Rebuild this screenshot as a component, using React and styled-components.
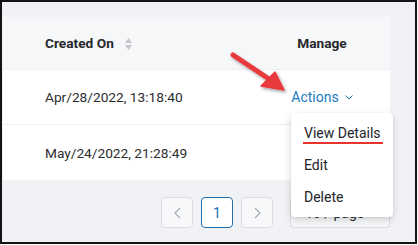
import React from "react";
import styled, { createGlobalStyle } from "styled-components";

const Global = createGlobalStyle`
  html, body { margin: 0; padding: 0; background: #ffffff; }
  body { font-family: Roboto, "Liberation Sans", Arial, sans-serif; }
  * { box-sizing: border-box; }
`;

const Frame = styled.div`
  position: relative;
  width: 417px;
  height: 244px;
  border: 2px solid #141414;
  background: #f0f2f5;
  overflow: hidden;
  display: flex;
  flex-direction: column;
  padding: 15px 25px 0 1px;
`;

const Card = styled.div`
  background: #ffffff;
  display: flex;
  flex-direction: column;
`;

const Row = styled.div`
  display: grid;
  grid-template-columns: 1fr 136px;
  align-items: center;
  height: ${(p) => p.$h || 55}px;
  background: ${(p) => (p.$head ? "#f6f7f9" : "#ffffff")};
  border-bottom: ${(p) => (p.$last ? "none" : "1px solid #eeeff1")};
`;

const Cell = styled.div`
  font-size: 13.7px;
  color: ${(p) => (p.$head ? "#26282b" : "#2b2d30")};
  font-weight: ${(p) => (p.$head ? 700 : 400)};
  padding-left: ${(p) => (p.$center ? 0 : 42)}px;
  text-align: ${(p) => (p.$center ? "center" : "left")};
  display: flex;
  align-items: center;
  justify-content: ${(p) => (p.$center ? "center" : "flex-start")};
  gap: 11px;
`;

const Sorter = styled.span`
  display: inline-flex;
  flex-direction: column;
  gap: 2px;
  margin-top: 1px;
`;

const ActionLink = styled.span`
  color: #1b7bc0;
  font-size: 14px;
  display: inline-flex;
  align-items: center;
  gap: 6px;
`;

const Pager = styled.div`
  display: flex;
  justify-content: flex-end;
  gap: 8px;
  padding-top: 17px;
`;

const PageBtn = styled.div`
  width: 32px;
  height: 31px;
  border: 1px solid ${(p) => (p.$active ? "#1d6fb0" : "#dcdde0")};
  border-radius: 4px;
  background: ${(p) => (p.$active ? "#ffffff" : "#f7f8fa")};
  display: flex;
  align-items: center;
  justify-content: center;
  color: ${(p) => (p.$active ? "#1d6fb0" : "#9a9da3")};
  font-size: 14px;
`;

const SizeSelect = styled.div`
  width: 100px;
  height: 31px;
  margin-left: 9px;
  border: 1px solid #dcdde0;
  border-radius: 4px;
  background: #f7f8fa;
  display: flex;
  align-items: center;
  justify-content: space-between;
  padding: 0 12px 0 14px;
  font-size: 14px;
  color: #2b2d30;
`;

const Menu = styled.div`
  position: absolute;
  left: 289px;
  top: 111px;
  width: 102px;
  padding: 4px 0;
  background: #ffffff;
  border-radius: 4px;
  box-shadow: 0 3px 8px rgba(0, 0, 0, 0.14), 0 1px 3px rgba(0, 0, 0, 0.08);
  display: flex;
  flex-direction: column;
`;

const MenuItem = styled.div`
  height: 32px;
  display: flex;
  align-items: center;
  padding-left: 13px;
  font-size: 14px;
  color: #22252a;
`;

const Marked = styled.span`
  display: inline-block;
  position: relative;
  &::after {
    content: "";
    position: absolute;
    left: -1px;
    right: -2px;
    bottom: -3px;
    height: 2px;
    background: #e8342f;
  }
`;

const ArrowLayer = styled.svg`
  position: absolute;
  left: 0;
  top: 0;
  width: 413px;
  height: 240px;
  pointer-events: none;
`;

const Tri = ({ up }) => (
  <svg width="7" height="5" viewBox="0 0 7 5">
    <path d={up ? "M3.5 0 L7 5 L0 5 Z" : "M0 0 L7 0 L3.5 5 Z"} fill="#c3c5c9" />
  </svg>
);

export default function App() {
  return (
    <>
      <Global />
      <Frame>
        <Card>
          <Row $head $h={53}>
            <Cell $head>
              Created On
              <Sorter>
                <Tri up />
                <Tri />
              </Sorter>
            </Cell>
            <Cell $head $center>Manage</Cell>
          </Row>
          <Row>
            <Cell>Apr/28/2022, 13:18:40</Cell>
            <Cell $center>
              <ActionLink>
                Actions
                <svg width="8" height="5" viewBox="0 0 8 5">
                  <path d="M0.5 0.5 L4 4 L7.5 0.5" fill="none" stroke="#1b7bc0" strokeWidth="1" />
                </svg>
              </ActionLink>
            </Cell>
          </Row>
          <Row $last>
            <Cell>May/24/2022, 21:28:49</Cell>
            <Cell $center />
          </Row>
        </Card>
        <Pager>
          <PageBtn>
            <svg width="7" height="12" viewBox="0 0 7 12">
              <path d="M6 1 L1 6 L6 11" fill="none" stroke="#a5a8ad" strokeWidth="1.1" />
            </svg>
          </PageBtn>
          <PageBtn $active>1</PageBtn>
          <PageBtn>
            <svg width="7" height="12" viewBox="0 0 7 12">
              <path d="M1 1 L6 6 L1 11" fill="none" stroke="#a5a8ad" strokeWidth="1.1" />
            </svg>
          </PageBtn>
          <SizeSelect>
            <span>10 / page</span>
            <svg width="8" height="5" viewBox="0 0 8 5">
              <path d="M0.5 0.5 L4 4 L7.5 0.5" fill="none" stroke="#a5a8ad" strokeWidth="1.1" />
            </svg>
          </SizeSelect>
        </Pager>
        <Menu>
          <MenuItem>
            <Marked>View Details</Marked>
          </MenuItem>
          <MenuItem>Edit</MenuItem>
          <MenuItem>Delete</MenuItem>
        </Menu>
        <ArrowLayer viewBox="0 0 413 240">
          <defs>
            <filter id="sh" x="-20%" y="-20%" width="150%" height="150%">
              <feDropShadow dx="1.5" dy="2" stdDeviation="1.5" floodColor="#000" floodOpacity="0.35" />
            </filter>
          </defs>
          <g filter="url(#sh)">
            <line x1="231" y1="53" x2="270" y2="79" stroke="#e93a3c" strokeWidth="5" strokeLinecap="round" />
            <path d="M282 88 L259 84 L273 70 Z" fill="#e93a3c" stroke="#e93a3c" strokeWidth="1.5" strokeLinejoin="round" />
          </g>
        </ArrowLayer>
      </Frame>
    </>
  );
}
